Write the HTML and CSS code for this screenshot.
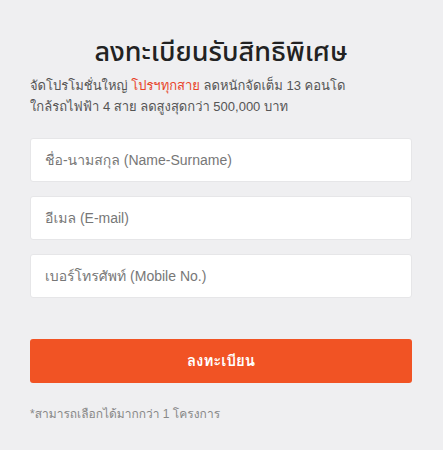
FILE: index.html
```html
<!DOCTYPE html>
<html lang="th">
<head>
<meta charset="utf-8">
<link rel="stylesheet" href="styles.css">
</head>
<body>
<main class="panel">
  <h1 class="title">ลงทะเบียนรับสิทธิพิเศษ</h1>
  <p class="intro">จัดโปรโมชั่นใหญ่ <span class="hl">โปรฯทุกสาย</span> ลดหนักจัดเต็ม 13 คอนโด<br>ใกล้รถไฟฟ้า 4 สาย ลดสูงสุดกว่า 500,000 บาท</p>
  <form class="form">
    <input class="field" type="text" placeholder="ชื่อ-นามสกุล (Name-Surname)">
    <input class="field" type="email" placeholder="อีเมล (E-mail)">
    <input class="field" type="tel" placeholder="เบอร์โทรศัพท์ (Mobile No.)">
    <button class="submit" type="button">ลงทะเบียน</button>
  </form>
  <p class="note">*สามารถเลือกได้มากกว่า 1 โครงการ</p>
</main>
</body>
</html>
```
FILE: styles.css
```css
html, body {
  margin: 0;
  padding: 0;
  background: #efeff1;
}
body {
  font-family: "Liberation Sans", "Loma", sans-serif;
  color: #555;
}
.panel {
  padding: 33px 31px 0 30px;
  display: flex;
  flex-direction: column;
}
.title {
  margin: 0;
  text-align: center;
  font-family: "Noto Sans Thai", "Noto Sans", sans-serif;
  font-size: 27px;
  font-weight: 500;
  color: #222;
  line-height: 40px;
}
.intro {
  margin: 2px 0 0;
  font-size: 13px;
  line-height: 21px;
  color: #555;
}
.hl {
  color: #e8452a;
}
.form {
  margin-top: 21px;
  display: flex;
  flex-direction: column;
  gap: 14px;
}
.field {
  box-sizing: border-box;
  height: 44px;
  width: 100%;
  border: 1px solid #e6e6e8;
  border-radius: 3px;
  background: #fff;
  padding: 0 14px;
  font-family: "Liberation Sans", "Loma", sans-serif;
  font-size: 14px;
  color: #333;
  outline: none;
}
.field::placeholder {
  color: #777;
}
.submit {
  margin-top: 27px;
  height: 44px;
  width: 100%;
  border: none;
  border-radius: 3px;
  background: #f15324;
  color: #fff;
  font-family: "Liberation Sans", "Loma", sans-serif;
  font-size: 15px;
  font-weight: 700;
}
.note {
  margin: 21px 0 0;
  font-size: 12px;
  color: #888;
}
```
